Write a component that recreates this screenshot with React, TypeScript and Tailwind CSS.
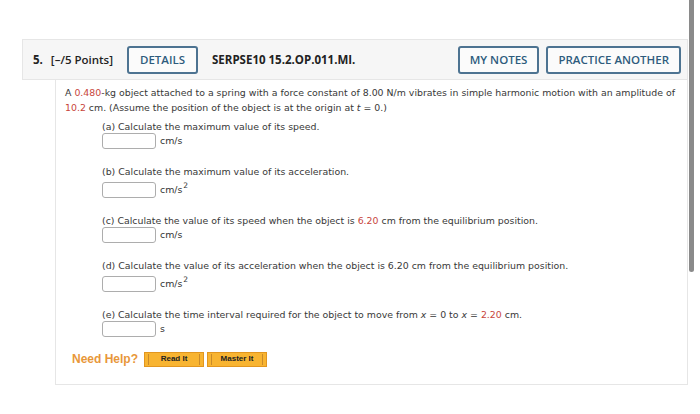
import type { ReactNode } from 'react';

const RED = 'text-[#c8453b]';

function HeaderButton({ children, wide }: { children: ReactNode; wide?: boolean }) {
  return (
    <button
      type="button"
      className={`flex h-[28px] items-center justify-center rounded-[3px] border-2 border-[#4d7391] bg-[#fbfbfb] font-['Open_Sans',sans-serif] text-[11.5px] font-semibold text-[#2e5b7d] ${
        wide ? 'px-[11px]' : 'px-[10px]'
      }`}
    >
      {children}
    </button>
  );
}

function HelpButton({ label }: { label: string }) {
  return (
    <button
      type="button"
      className="flex h-[15px] w-[60px] items-stretch border border-[#e2961f] bg-[#f8b431] px-[3px] py-[1px]"
    >
      <span className="flex flex-1 items-center justify-center border-x border-[#c98a2a] font-['Liberation_Sans',Arial,sans-serif] text-[8px] font-bold leading-none text-[#222]">
        {label}
      </span>
    </button>
  );
}

interface Part {
  label: ReactNode;
  unit: ReactNode;
  squared?: boolean;
}

const parts: Part[] = [
  { label: '(a) Calculate the maximum value of its speed.', unit: 'cm/s' },
  { label: '(b) Calculate the maximum value of its acceleration.', unit: 'cm/s', squared: true },
  {
    label: (
      <>
        (c) Calculate the value of its speed when the object is <span className={RED}>6.20</span> cm
        from the equilibrium position.
      </>
    ),
    unit: 'cm/s',
  },
  {
    label:
      '(d) Calculate the value of its acceleration when the object is 6.20 cm from the equilibrium position.',
    unit: 'cm/s',
    squared: true,
  },
  {
    label: (
      <>
        (e) Calculate the time interval required for the object to move from <i>x</i> = 0 to{' '}
        <i>x</i> = <span className={RED}>2.20</span> cm.
      </>
    ),
    unit: 's',
  },
];

function AnswerPart({ part }: { part: Part }) {
  return (
    <div className="flex flex-col">
      <div className="leading-[14px] whitespace-nowrap">{part.label}</div>
      <div className={`flex items-center gap-[4px] ${part.squared ? 'mt-[3px]' : 'mt-[-1px]'}`}>
        <div className="h-[16px] w-[54px] rounded-[3px] border border-[#adadad] bg-white" />
        <span className="leading-[12px] text-[#333]">
          {part.unit}
          {part.squared && <span className="relative -top-[5px] ml-[1px] text-[7.5px]">2</span>}
        </span>
      </div>
    </div>
  );
}

export default function App() {
  return (
    <div className="relative h-[414px] w-[700px] overflow-hidden bg-white">
      <div className="pl-[22px] pr-[12px] pt-[39px]">
        <div className="flex h-[41px] items-center border border-[#e6e6e6] bg-[#f6f6f6] pl-[10px] pr-[6px] font-['Open_Sans',sans-serif] text-[#222]">
          <span className="text-[11.5px] font-bold">5.</span>
          <span className="ml-[8px] text-[11.5px] font-semibold">[–/5 Points]</span>
          <div className="ml-[14px]">
            <HeaderButton wide>DETAILS</HeaderButton>
          </div>
          <span className="ml-[14px] text-[11.5px] font-bold">SERPSE10 15.2.OP.011.MI.</span>
          <div className="ml-auto flex gap-[7px]">
            <HeaderButton>MY NOTES</HeaderButton>
            <HeaderButton>PRACTICE ANOTHER</HeaderButton>
          </div>
        </div>

        <div className="ml-[33px] h-[305px] border-x border-b border-[#e6e6e6] pl-[9px] pt-[5px] font-['DejaVu_Sans',Verdana,sans-serif] text-[9.4px] text-[#383838]">
          <p className="leading-[15px] whitespace-nowrap">
            A <span className={RED}>0.480</span>-kg object attached to a spring with a force constant of 8.00 N/m vibrates in
            simple harmonic motion with an amplitude of
            <br />
            <span className={RED}>10.2</span> cm. (Assume the position of the object is at the origin at <i>t</i> = 0.)
          </p>

          <div className="ml-[37px] mt-[5px] flex flex-col gap-[16px]">
            {parts.map((p, i) => (
              <AnswerPart key={i} part={p} />
            ))}
          </div>

          <div className="ml-[7px] mt-[13px] flex items-center">
            <span className="font-['Liberation_Sans',Arial,sans-serif] text-[12px] font-bold text-[#e8973a]">
              Need Help?
            </span>
            <div className="ml-[6px] flex gap-[3px]">
              <HelpButton label="Read It" />
              <HelpButton label="Master It" />
            </div>
          </div>
        </div>
      </div>

      {/* scrollbar thumb */}
      <div className="absolute right-[6px] top-0 h-[272px] w-[5px] rounded-b-full bg-[#8a8a8a]" />
    </div>
  );
}
